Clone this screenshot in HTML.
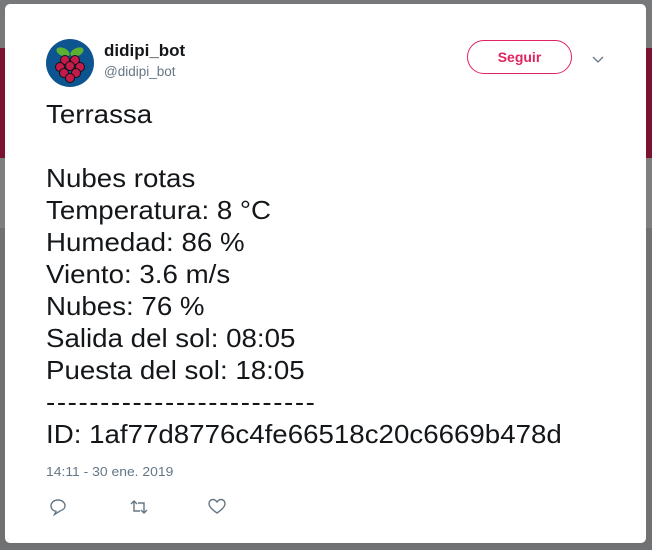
<html><head><style>
body{margin:0;width:652px;height:550px;background:#6f7173;position:relative;overflow:hidden;font-family:"Liberation Sans",Arial,sans-serif}
.s1{position:absolute;left:0;top:48px;width:652px;height:110px;background:#7b1330}
.s2{position:absolute;left:0;top:158px;width:652px;height:70px;background:#7e7f80}
.s0{position:absolute;left:0;top:0;width:652px;height:48px;background:#777879}
.card{position:absolute;left:5px;top:4px;width:641px;height:539px;background:#fff;border-radius:5px}
.av{position:absolute;left:41px;top:35px;width:48px;height:48px;border-radius:50%;background:#0d5591;overflow:hidden}
.name{position:absolute;left:99px;top:37px;font-weight:bold;font-size:17px;color:#14171a}
.hdl{position:absolute;left:99px;top:60px;font-size:13.5px;color:#657786}
.btn{position:absolute;left:462px;top:36px;width:105px;height:34px;box-sizing:border-box;border:1px solid #e0245e;border-radius:17px;color:#e0245e;font-weight:bold;font-size:14px;text-align:center;line-height:32px}
.txt{position:absolute;left:41px;top:94px;font-size:26px;line-height:32px;color:#14171a;white-space:pre;transform:scaleX(1.065);transform-origin:0 0}
.dash{letter-spacing:1.5px}
.dt{position:absolute;left:41px;top:460px;font-size:13px;color:#657786;transform:scaleX(1.07);transform-origin:0 0}
</style></head><body>
<div class="s0"></div><div class="s1"></div><div class="s2"></div>
<div class="card">
<div class="av"><svg width="48" height="48" viewBox="0 0 48 48">
<ellipse cx="17" cy="13" rx="7" ry="4" fill="#5bb033" transform="rotate(25 17 13)"/>
<ellipse cx="31" cy="13" rx="7" ry="4" fill="#5bb033" transform="rotate(-25 31 13)"/>
<g fill="#c51a4a" stroke="#111" stroke-width="1">
<circle cx="19" cy="21" r="4.5"/><circle cx="29" cy="21" r="4.5"/>
<circle cx="14" cy="28" r="4.5"/><circle cx="24" cy="27" r="4.5"/><circle cx="34" cy="28" r="4.5"/>
<circle cx="18" cy="34" r="4.5"/><circle cx="30" cy="34" r="4.5"/><circle cx="24" cy="39" r="4.5"/></g></svg></div>
<div class="name">didipi_bot</div>
<div class="hdl">@didipi_bot</div>
<div class="btn">Seguir</div>
<svg style="position:absolute;left:587px;top:52px" width="12" height="8"><path d="M1 1 L6 6 L11 1" stroke="#657786" fill="none" stroke-width="1.3"/></svg>
<div class="txt">Terrassa

Nubes rotas
Temperatura: 8 °C
Humedad: 86 %
Viento: 3.6 m/s
Nubes: 76 %
Salida del sol: 08:05
Puesta del sol: 18:05
<span class="dash">-------------------------</span>
ID: 1af77d8776c4fe66518c20c6669b478d</div>
<div class="dt">14:11 - 30 ene. 2019</div>
<svg style="position:absolute;left:44px;top:494px" width="18" height="18" viewBox="0 0 18 18" fill="none" stroke="#657786" stroke-width="1.4"><path d="M9 2C5 2 2 4.5 2 8c0 3 2.5 5 5 5.3L5.5 16.5 11 13C14 12 16 10 16 8 16 4.5 13 2 9 2z"/></svg>
<svg style="position:absolute;left:124px;top:494px" width="20" height="18" viewBox="0 0 20 18" fill="none" stroke="#657786" stroke-width="1.4"><path d="M2 6 L5 3 L8 6 M5 3 V13 H11 M18 12 L15 15 L12 12 M15 15 V5 H9"/></svg>
<svg style="position:absolute;left:203px;top:494px" width="18" height="17" viewBox="0 0 18 17" fill="none" stroke="#657786" stroke-width="1.4"><path d="M9 15 C3 11 1 8 1 5.5 1 3 3 1.5 5 1.5 7 1.5 8.3 3 9 4 9.7 3 11 1.5 13 1.5 15 1.5 17 3 17 5.5 17 8 15 11 9 15z"/></svg>
</div>
</body></html>
